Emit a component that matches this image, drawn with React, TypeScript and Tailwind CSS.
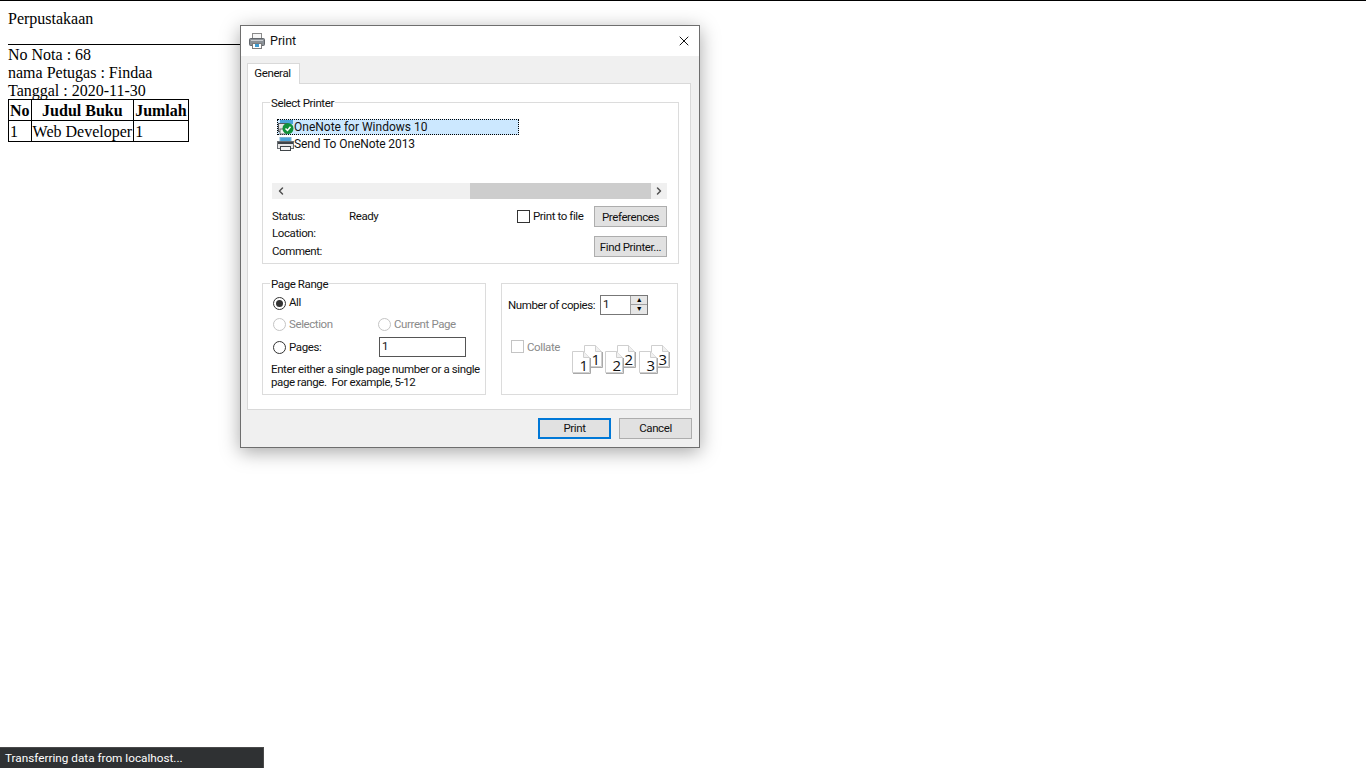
import React from 'react';
import { X, ChevronLeft, ChevronRight } from 'lucide-react';

function Group({ label, className, children }: { label: string; className: string; children: React.ReactNode }) {
  return (
    <div className={`relative border border-[#dcdcdc] ${className}`}>
      {label && <span className="absolute left-[7px] top-[-7px] bg-white px-px leading-[14px]">{label}</span>}
      {children}
    </div>
  );
}

function Btn({ label, primary, className = '' }: { label: string; primary?: boolean; className?: string }) {
  return (
    <div
      className={`flex h-[21px] w-[73px] shrink-0 items-center justify-center whitespace-nowrap bg-[#e1e1e1] ${
        primary ? 'border-2 border-[#0078d7]' : 'border border-[#adadad]'
      } ${className}`}
    >
      {label}
    </div>
  );
}

function Radio({ checked, disabled }: { checked?: boolean; disabled?: boolean }) {
  return (
    <span
      className={`mr-[3px] flex h-[13px] w-[13px] shrink-0 items-center justify-center rounded-full border bg-white ${
        disabled ? 'border-[#c4c4c4]' : 'border-[#333333]'
      }`}
    >
      {checked && <span className="h-[7px] w-[7px] rounded-full bg-[#333333]" />}
    </span>
  );
}

function PrinterIcon() {
  return (
    <svg width="16" height="16" viewBox="0 0 16 16" className="shrink-0">
      <rect x="3.5" y="0.5" width="9" height="6" fill="#f6f6f6" stroke="#8a8a8a" />
      <rect x="0.5" y="5.5" width="15" height="7" rx="1" fill="#8b9197" stroke="#63676c" />
      <rect x="2" y="7" width="12" height="1" fill="#c9ccd0" />
      <rect x="3.5" y="10.5" width="9" height="5" fill="#ffffff" stroke="#7d7d7d" />
      <rect x="6" y="11" width="4" height="3" fill="#3f9bd1" />
    </svg>
  );
}

function SendIcon() {
  return (
    <svg width="17" height="15" viewBox="0 0 17 15" className="shrink-0">
      <rect x="3" y="0.5" width="11" height="4" fill="#4ba3d9" stroke="#7fb4d4" />
      <rect x="0.5" y="4.5" width="16" height="7" fill="#e8e8e8" stroke="#6a6e73" />
      <rect x="1" y="5" width="15" height="2" fill="#3f4448" />
      <rect x="3" y="9" width="11" height="5" fill="#3f4448" />
      <rect x="4" y="10" width="9" height="3" fill="#f4f4f4" />
    </svg>
  );
}

function OneNoteIcon() {
  return (
    <svg width="17" height="15" viewBox="0 0 17 15" className="shrink-0">
      <rect x="2" y="0" width="13" height="4" fill="#4ba3d9" />
      <rect x="0.5" y="3.5" width="9" height="8" fill="#e6e6e6" stroke="#55595e" />
      <rect x="2" y="9" width="6" height="5" fill="#f4f4f4" stroke="#6d6d6d" />
      <circle cx="10" cy="8.5" r="5.5" fill="#11913a" />
      <path d="M7.5 8.5 L9.5 10.5 L12.5 6.8" fill="none" stroke="#ffffff" strokeWidth="1.5" />
    </svg>
  );
}

function Sheet({ n, x, y }: { n: number; x: number; y: number }) {
  return (
    <g transform={`translate(${x} ${y})`}>
      <path d="M0.5 0.5 H11.5 L17.5 6.5 V21.5 H0.5 Z" fill="#ffffff" stroke="#cfcfcf" />
      <path d="M11.5 0.5 V6.5 H17.5" fill="#f0f0f0" stroke="#cfcfcf" />
      <path d="M1 22.5 H18.5 V7" fill="none" stroke="#a9a9a9" />
      <text x="11.5" y="20" fontSize="15" fill="#111111" textAnchor="middle" fontFamily="'Open Sans', sans-serif">
        {n}
      </text>
    </g>
  );
}

function CollateSet({ n, className = '' }: { n: number; className?: string }) {
  return (
    <svg width="31" height="30" viewBox="0 0 31 30" className={`shrink-0 ${className}`}>
      <Sheet n={n} x={12} y={0} />
      <Sheet n={n} x={0} y={6} />
    </svg>
  );
}

export default function App() {
  return (
    <div className="relative h-[768px] w-[1366px] overflow-hidden bg-white">
      {/* page behind the dialog */}
      <div className="h-px bg-black" />
      <div className="px-2 pt-[9px] font-['Liberation_Serif',serif] text-[16px] leading-[18px] text-black">
        <div>Perpustakaan</div>
        <div className="mt-[16px] h-px w-[500px] bg-black" />
        <div className="mt-px">No Nota : 68</div>
        <div>nama Petugas : Findaa</div>
        <div>Tanggal : 2020-11-30</div>
        <table className="mt-[-1px] border-collapse">
          <tbody>
            <tr className="h-[21px] font-bold">
              <td className="border border-black px-px text-center align-bottom">No</td>
              <td className="border border-black px-px text-center align-bottom">Judul Buku</td>
              <td className="border border-black px-px text-center align-bottom">Jumlah</td>
            </tr>
            <tr className="h-[21px]">
              <td className="border border-black px-px align-bottom">1</td>
              <td className="border border-black px-px align-bottom">Web Developer</td>
              <td className="border border-black px-px align-bottom">1</td>
            </tr>
          </tbody>
        </table>
      </div>

      {/* print dialog */}
      <div className="absolute left-[240px] top-[25px] flex h-[423px] w-[460px] flex-col border border-[#6e6e6e] bg-[#f0f0f0] font-['Roboto',sans-serif] text-[11.5px] tracking-[-0.4px] text-[#111111] shadow-[0_4px_18px_rgba(0,0,0,0.35)]">
        <div className="flex h-[30px] shrink-0 items-center bg-white pl-[8px] pr-[7px]">
          <PrinterIcon />
          <span className="ml-[5px] text-[12.5px] tracking-normal">Print</span>
          <X className="ml-auto h-[16px] w-[16px] text-black" strokeWidth={1.4} />
        </div>

        <div className="px-[6px] pt-[7px]">
          <div className="relative z-10 mb-[-1px] flex h-[21px] w-[53px] items-center justify-center border border-b-0 border-[#d9d9d9] bg-white pr-[2px]">
            General
          </div>
          <div className="h-[327px] w-[444px] border border-[#d9d9d9] bg-white pl-[14px] pt-[18px]">
            <Group label="Select Printer" className="h-[162px] w-[417px] pl-[9px] pr-[11px] pt-[16px]">
              <div className="ml-[5px] flex h-[16px] w-[242px] items-center border border-dotted border-black bg-[#cce8ff]">
                <OneNoteIcon />
                <span className="ml-[-1px] text-[12px] tracking-normal">OneNote for Windows 10</span>
              </div>
              <div className="ml-[5px] mt-px flex h-[16px] items-center">
                <SendIcon />
                <span className="text-[12px] tracking-[-0.1px]">Send To OneNote 2013</span>
              </div>
              <div className="mt-[31px] flex h-[16px] w-[395px] items-center bg-[#f0f0f0]">
                <ChevronLeft className="ml-[3px] h-[12px] w-[12px] text-[#505050]" strokeWidth={3} />
                <div className="ml-[183px] h-full w-[181px] bg-[#cdcdcd]" />
                <ChevronRight className="ml-[2px] h-[12px] w-[12px] text-[#505050]" strokeWidth={3} />
              </div>
              <div className="mt-[7px] flex">
                <div className="w-[245px] shrink-0 pt-[1.5px] leading-[17.5px]">
                  <div className="flex">
                    <span className="w-[77px]">Status:</span>
                    <span>Ready</span>
                  </div>
                  <div>Location:</div>
                  <div>Comment:</div>
                </div>
                <div className="flex flex-col">
                  <div className="flex items-center">
                    <span className="mr-[3px] h-[13px] w-[13px] shrink-0 border border-[#333333] bg-white" />
                    <span className="w-[61px] whitespace-nowrap pt-px">Print to file</span>
                    <Btn label="Preferences" className="pt-[2px]" />
                  </div>
                  <Btn label="Find Printer..." className="ml-[77px] mt-[9px] pt-[2px]" />
                </div>
              </div>
            </Group>

            <div className="mt-[19px] flex gap-[15px]">
              <Group label="Page Range" className="h-[112px] w-[224px] pl-[10px] pt-[12px]">
                <div className="flex h-[14px] items-center">
                  <Radio checked />
                  All
                </div>
                <div className="mt-[7px] flex h-[14px] items-center text-[#8a8a8a]">
                  <span className="flex w-[105px] items-center">
                    <Radio disabled />
                    <span className="pt-px">Selection</span>
                  </span>
                  <Radio disabled />
                  <span className="pt-px">Current Page</span>
                </div>
                <div className="mt-[6px] flex h-[20px] items-center">
                  <span className="flex w-[106px] items-center">
                    <Radio />
                    <span className="pt-px">Pages:</span>
                  </span>
                  <div className="flex h-[20px] w-[87px] items-center border border-[#555555] pl-[2px]">1</div>
                </div>
                <div className="ml-[-2px] mt-[6px] w-[212px] leading-[13px]">
                  Enter either a single page number or a single page range.&nbsp; For example, 5-12
                </div>
              </Group>

              <Group label="" className="h-[112px] w-[177px] pl-[6px] pt-[11px]">
                <div className="flex items-center">
                  <span className="w-[92px] whitespace-nowrap pt-px">Number of copies:</span>
                  <div className="flex h-[20px] w-[48px] items-center border border-[#777777] pl-[2px]">
                    1
                    <div className="ml-auto flex h-full w-[17px] flex-col border-l border-[#a0a0a0] bg-[#e6e6e6]">
                      <span className="flex h-[9px] items-center justify-center border-b border-[#a0a0a0] text-[7px] leading-none text-black">▲</span>
                      <span className="flex flex-1 items-center justify-center text-[7px] leading-none text-black">▼</span>
                    </div>
                  </div>
                </div>
                <div className="mt-[25px] flex">
                  <div className="flex h-[13px] w-[64px] shrink-0 items-center pl-[3px] text-[#8a8a8a]">
                    <span className="mr-[3px] h-[13px] w-[13px] shrink-0 border border-[#c4c4c4] bg-white" />
                    <span className="pt-[2px]">Collate</span>
                  </div>
                  <div className="mt-[5px] flex">
                    <CollateSet n={1} />
                    <CollateSet n={2} className="ml-[2px]" />
                    <CollateSet n={3} className="ml-[3px]" />
                  </div>
                </div>
              </Group>
            </div>
          </div>
        </div>

        <div className="mt-[8px] flex justify-end gap-[8px] pr-[7px]">
          <Btn label="Print" primary />
          <Btn label="Cancel" />
        </div>
      </div>

      {/* browser status bubble */}
      <div className="absolute bottom-0 left-0 flex h-[21px] w-[264px] items-center border-r border-t border-[#4a4a4a] bg-[#2f3133] pl-[5px] pt-px font-['Roboto',sans-serif] text-[11.75px] text-white">
        Transferring data from localhost...
      </div>
    </div>
  );
}
